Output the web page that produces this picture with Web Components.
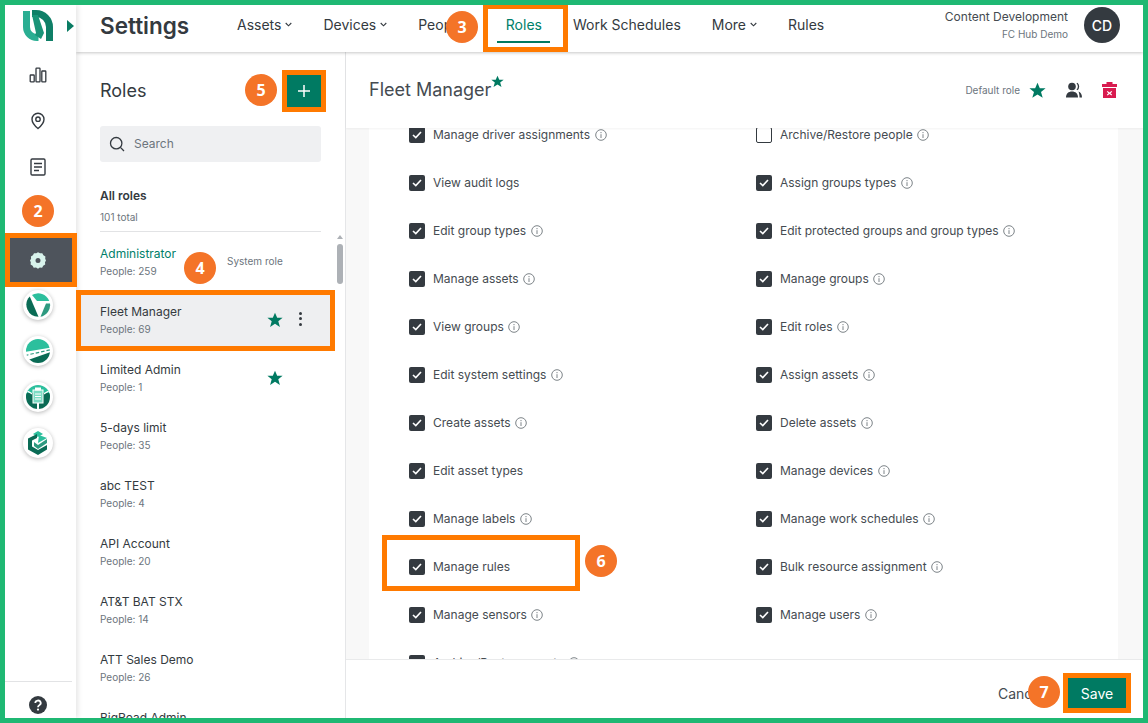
<!DOCTYPE html>
<html><head><meta charset="utf-8"><style>
html,body{margin:0;padding:0;background:#fff}
body{font-family:Inter,"Liberation Sans",sans-serif;color:#343a40}
</style></head><body>
<app-frame>
  <side-rail slot="rail"></side-rail>
  <top-bar slot="top"></top-bar>
  <roles-panel slot="panel"></roles-panel>
  <role-detail slot="detail"></role-detail>
</app-frame>
<script>
const STAR='M8 .8l2.2 5h5.4l-4.3 3.5 1.6 5.6L8 11.7l-4.9 3.2 1.6-5.6L.4 5.8h5.4z';
function def(name,css,html){
  customElements.define(name,class extends HTMLElement{
    connectedCallback(){
      if(this.shadowRoot)return;
      const r=this.attachShadow({mode:'open'});
      r.innerHTML='<style>'+css+'</style>'+(typeof html==='function'?html(this):html);
    }
  });
}
def('call-out',`:host{position:absolute;box-sizing:border-box;border:5px solid #ff7a00;pointer-events:none;z-index:5}`,'');
def('step-badge',`:host{position:absolute;width:32px;height:32px;border-radius:50%;background:#f47428;color:#fff;font:700 16px/32px "Open Sans",Inter,sans-serif;text-align:center;z-index:6}`,'<slot></slot>');
def('app-frame',`
:host{display:block;position:relative;box-sizing:border-box;width:1148px;height:723px;border:5px solid #1fb873;overflow:hidden;background:#fff}
.g{display:grid;grid-template-columns:71px 270px 1fr;grid-template-rows:47px 1fr;height:100%}
.r{grid-row:1/3;display:flex;min-height:0}.t{grid-column:2/4;display:flex;position:relative;z-index:3}.p{display:flex;min-height:0}.d{display:flex;min-height:0;min-width:0}
::slotted(*){flex:1;min-width:0}
`,`<div class="g"><div class="r"><slot name="rail"></slot></div><div class="t"><slot name="top"></slot></div><div class="p"><slot name="panel"></slot></div><div class="d"><slot name="detail"></slot></div></div>
<call-out style="left:0;top:228px;width:72px;height:54px"></call-out>
<call-out style="left:478px;top:-1px;width:85px;height:48px"></call-out>
<call-out style="left:71px;top:285px;width:259px;height:61px"></call-out>
<call-out style="left:277px;top:65px;width:44px;height:42px"></call-out>
<call-out style="left:377px;top:530px;width:198px;height:56px"></call-out>
<call-out style="left:1058px;top:668px;width:68px;height:40px"></call-out>
<step-badge style="left:17px;top:190px">2</step-badge>
<step-badge style="left:441px;top:6px">3</step-badge>
<step-badge style="left:179px;top:247px">4</step-badge>
<step-badge style="left:240px;top:69px">5</step-badge>
<step-badge style="left:580px;top:540px">6</step-badge>
<step-badge style="left:1023px;top:671px">7</step-badge>`);
const circ=(inner)=>`<span class="c"><svg width="26" height="26" viewBox="0 0 26 26">${inner}</svg></span>`;
def('side-rail',`
:host{display:flex;flex-direction:column;align-items:stretch;background:#fff;position:relative;z-index:4;box-shadow:2px 0 5px rgba(0,0,0,.1)}
.logo{height:47px;display:flex;align-items:flex-start;padding:5px 0 0 18px;box-sizing:border-box;gap:14px;flex:none}
.tri{margin-top:10px}
.nav{height:46px;display:flex;align-items:center;justify-content:center;flex:none;padding-right:5px}
.sel{height:44px;margin:0 4px 0 5px;background:#4e545c;display:flex;align-items:center;justify-content:center;flex:none;padding-right:6px}
.c{width:30px;height:30px;border-radius:50%;background:#fff;box-shadow:0 1px 4px rgba(0,0,0,.28);display:flex;align-items:center;justify-content:center}
.sp{flex:1}
.help{border-top:1px solid #e2e3e5;height:37px;margin-right:4px;display:flex;align-items:center;justify-content:center;box-sizing:border-box;padding:10px 1px 0 0;flex:none}
`,`<div class="logo"><svg width="30" height="31" viewBox="0 0 30 31" fill="none"><path d="M3.500 1v16a10.500 10.500 0 0 0 10.500 10.500h1.500" stroke="#2aae92" stroke-width="7"/><path d="M9 3.500h4A13.500 13.500 0 0 1 26.500 17v14" stroke="#0f7f67" stroke-width="7"/><path d="M9 5l6 0 6 18-3 6-6-4 1-2z" fill="#1a9478"/></svg><svg class="tri" width="7" height="12" viewBox="0 0 7 12"><path d="M0 0l7 6-7 6z" fill="#0a7c63"/></svg></div>
<div class="nav"><svg width="18" height="18" viewBox="0 0 18 18" fill="none" stroke="#343a40" stroke-width="1.3"><rect x="1.200" y="9" width="4" height="6.800" rx=".6"/><rect x="7" y="2.200" width="4" height="13.600" rx=".6"/><rect x="12.800" y="5" width="4" height="10.800" rx=".6"/></svg></div>
<div class="nav"><svg width="16" height="18" viewBox="0 0 16 18" fill="none" stroke="#343a40" stroke-width="1.4"><path d="M8 16.500S2 11.600 2 7.200a6 6 0 0 1 12 0c0 4.400-6 9.300-6 9.300z"/><circle cx="8" cy="7.200" r="2.200"/></svg></div>
<div class="nav"><svg width="16" height="18" viewBox="0 0 16 18" fill="none" stroke="#343a40" stroke-width="1.4"><rect x="1" y="1" width="14" height="16" rx="1.200"/><path d="M4 5.500h8M4 9h8M4 12.500h5"/></svg></div>
<div style="height:48px;flex:none"></div>
<div class="sel"><svg width="18" height="18" viewBox="0 0 18 18"><path fill="#d8f3ec" fill-rule="evenodd" d="M9 1.200l2 1.100 2.300-.1 1.100 2 2 1.200-.2 2.300L17 9.500l-1 1.800.2 2.300-2 1.200-1.100 1.900-2.300-.1-1.800 1.100-2-1.100-2.300.1-1.100-1.900-2-1.200.2-2.300L1 9.500l1.100-1.800L1.900 5.400l2-1.200 1.100-2 2.300.1zM9 7a2.500 2.500 0 1 0 0 5 2.500 2.500 0 0 0 0-5z"/></svg></div>
<div class="nav">${circ('<path d="M7 3A12 12 0 0 1 24.300 9H12z" fill="#2cbf9d"/><path d="M4.800 4.500L13.500 24.800A12 12 0 0 1 4.800 4.500z" fill="#0a6b55"/><path d="M25 11.500A12 12 0 0 1 15.500 24.800L21 11.500z" fill="#2e9a80"/>')}</div>
<div class="nav">${circ('<defs><clipPath id="b"><circle cx="13" cy="13" r="12"/></clipPath></defs><g clip-path="url(#b)"><path d="M0 0h26v9.500L0 14z" fill="#2cbf9d"/><path d="M3 22L26 14v12H3z" fill="#0a6b55"/><path d="M0 17.500L26 11.600" stroke="#2e9a80" stroke-width="1.200" stroke-dasharray="3.500 2"/></g>')}</div>
<div class="nav">${circ('<defs><clipPath id="d"><circle cx="13" cy="13" r="12"/></clipPath></defs><g clip-path="url(#d)"><rect width="26" height="13" fill="#2cbf9d"/><rect y="9" width="26" height="17" fill="#0a6b55"/><path d="M0 5l7 4v1.500L0 6.500zM26 5l-7 4v1.500l7-4z" fill="#fff"/><rect x="8" y="6" width="10" height="13" fill="#7bdcc4" stroke="#fff"/><path d="M10 10h6M10 12.500h6M10 15h6" stroke="#fff"/><rect x="10" y="3.500" width="6" height="3" fill="#fff"/><rect x="12" y="19" width="2" height="7" fill="#fff"/></g>')}</div>
<div class="nav">${circ('<path d="M13 1l5 3-5 3-5-3z" fill="#2cbf9d"/><path d="M3 8.500L12 4v4L7 10.500v6L13 20l9-5v4.500L13 25l-10-5.500z" fill="#0a6b55"/><path d="M9 12l4 3 9-6v4l-9 6-4-3z" fill="#2e9a80"/><path d="M14 5l8 3-9 5z" fill="#2cbf9d"/>')}</div>
<div class="sp"></div>
<div class="help"><svg width="18" height="18" viewBox="0 0 18 18"><circle cx="9" cy="9" r="9" fill="#343a40"/><path d="M6.300 7a2.700 2.500 0 1 1 4 2.200c-.9.5-1.300 1-1.300 2" fill="none" stroke="#fff" stroke-width="1.800"/><circle cx="9" cy="13.600" r="1.100" fill="#fff"/></svg></div>`);
const chev=`<svg class="ch" width="7" height="5" viewBox="0 0 7 5" fill="none" stroke="#343a40" stroke-width="1.100"><path d="M.7 1l2.800 2.800L6.300 1"/></svg>`;
def('nav-link',`
:host{display:flex;align-items:center;height:47px;font-size:14px;color:#343a40;position:relative;gap:4px;padding-bottom:8px;box-sizing:border-box}
:host([active]){color:#00806a}
:host([active])::after{content:"";position:absolute;left:-9px;right:-8px;bottom:9px;height:2px;background:#007a62}
`,h=>`<slot></slot>${h.hasAttribute('menu')?chev:''}`);
def('top-bar',`
:host{display:flex;align-items:center;background:#fff;box-shadow:0 1px 3px rgba(0,0,0,.22);padding:0 23px 0 24px;height:47px;box-sizing:border-box;position:relative}
h1{font:600 22.500px/1 Inter,sans-serif;margin:0 48px 0 0;padding-bottom:5px;color:#343a40;width:89px;white-space:nowrap}
nav{display:flex;gap:31px;flex:1}
.u{text-align:right;margin-right:16px;padding-bottom:5px}
.n{font-size:12px;line-height:16px;color:#454b51;white-space:nowrap}.o{font-size:10px;line-height:18px;color:#6c757d}
.a{width:36px;height:36px;border-radius:50%;background:#343a40;color:#fff;font-size:14px;font-weight:500;display:flex;align-items:center;justify-content:center;margin-bottom:7px}
`,`<h1>Settings</h1><nav><nav-link menu>Assets</nav-link><nav-link menu>Devices</nav-link><nav-link menu>People</nav-link><nav-link active>Roles</nav-link><nav-link>Work Schedules</nav-link><nav-link menu>More</nav-link><nav-link>Rules</nav-link></nav><div class="u"><div class="n">Content Development</div><div class="o">FC Hub Demo</div></div><div class="a">CD</div>`);
def('role-item',`
:host{display:flex;align-items:center;height:58px;box-sizing:border-box;padding:0 24px;flex:none;position:relative;width:254px}
:host([selected]){background:#eeeff1}
.x{flex:none;width:127px;margin-top:-1px}
.t{font-size:12px;line-height:18px;color:#343a40;white-space:nowrap}
:host([sys]) .t{color:#00806a}
.p{font-size:10px;line-height:17px;color:#6c757d;white-space:nowrap}
.s{font-size:10px;color:#6c757d;padding-bottom:4px;white-space:nowrap}
.i{position:absolute;left:191px;top:20px}
.m{position:absolute;left:223px;top:20px;display:flex;flex-direction:column;gap:2.400px}
.m b{width:3px;height:3px;border-radius:50%;background:#343a40;display:block}
`,h=>`<div class="x"><div class="t">${h.getAttribute('name')}</div><div class="p">People: ${h.getAttribute('people')}</div></div>
${h.hasAttribute('sys')?'<span class="s">System role</span>':''}
${h.hasAttribute('star')?`<svg class="i" width="16" height="16" viewBox="0 0 16 16"><path d="${STAR}" fill="#007a62"/></svg>`:''}
${h.hasAttribute('selected')?'<span class="m"><b></b><b></b><b></b></span>':''}`);
def('roles-panel',`
:host{display:flex;flex-direction:column;background:#fff;overflow:hidden;position:relative;border-right:1px solid #e5e6e8;box-sizing:border-box}
.h{display:flex;align-items:center;justify-content:space-between;padding:23px 24px 0 24px;height:32px;flex:none}
h2{font:400 18px/1 Inter,sans-serif;margin:0;color:#343a40}
.add{width:34px;height:32px;background:#007a62;display:flex;align-items:center;justify-content:center}
.s{margin:19px 24px 0;height:36px;background:#eff0f2;border-radius:3px;display:flex;align-items:center;padding:0 0 0 9px;gap:9px;font-size:12px;color:#6c757d;flex:none}
.s span{padding-bottom:1px}
.all{margin:25px 24px 0;font-size:12px;font-weight:600;line-height:18px;flex:none}
.tot{margin:5px 24px 0;font-size:10px;line-height:14px;color:#6c757d;flex:none}
hr{margin:7px 24px 0;border:0;border-top:1px solid #e2e3e5;flex:none}
.l{flex:1;min-height:0;overflow:hidden;display:flex;flex-direction:column;margin-top:2px}
.sb{position:absolute;right:2px;top:192px;width:6px;height:40px;background:#adb1b6;border-radius:3px}
.ar{position:absolute;right:2px;top:183px;width:0;height:0;border:3px solid transparent;border-bottom:4px solid #adb1b6;border-top:0}
`,`<div class="h"><h2>Roles</h2><div class="add"><svg width="14" height="14" viewBox="0 0 14 14" stroke="#fff" stroke-width="1.500"><path d="M7 1v12M1 7h12"/></svg></div></div>
<div class="s"><svg width="16" height="16" viewBox="0 0 16 16" fill="none" stroke="#343a40" stroke-width="1.300"><circle cx="7.200" cy="7.200" r="5.700"/><path d="M11.400 11.400L15 15"/></svg><span>Search</span></div>
<div class="all">All roles</div><div class="tot">101 total</div><hr>
<div class="sb"></div><div class="ar"></div>
<div class="l"><role-item sys name="Administrator" people="259"></role-item>
<role-item selected star name="Fleet Manager" people="69"></role-item>
<role-item star name="Limited Admin" people="1"></role-item>
<role-item name="5-days limit" people="35"></role-item>
<role-item name="abc TEST" people="4"></role-item>
<role-item name="API Account" people="20"></role-item>
<role-item name="AT&amp;T BAT STX" people="14"></role-item>
<role-item name="ATT Sales Demo" people="26"></role-item>
<role-item name="BigRoad Admin" people="3"></role-item></div>`);
def('perm-check',`
:host{display:flex;align-items:center;gap:8px;height:48px;font-size:12px;color:#454b51;white-space:nowrap}
.b{width:16px;height:16px;border-radius:2px;background:#343a40;display:flex;align-items:center;justify-content:center;flex:none;box-sizing:border-box}
:host([off]) .b{background:#fff;border:1px solid #343a40}
.t{padding-bottom:2px}
.i{margin-left:-3.500px}
`,h=>`<span class="b">${h.hasAttribute('off')?'':'<svg width="10" height="8" viewBox="0 0 10 8" fill="none" stroke="#fff" stroke-width="1.600"><path d="M1 4l2.800 2.600L9 1"/></svg>'}</span><span class="t">${h.getAttribute('label')}</span>${h.hasAttribute('noinfo')?'':'<svg class="i" width="12" height="12" viewBox="0 0 12 12" fill="none" stroke="#7d8388"><circle cx="6" cy="6" r="5.300"/><path d="M6 5.200V9M6 3v1.200"/></svg>'}`);
def('role-detail',`
:host{display:flex;flex-direction:column;background:#f8f8f8;min-height:0;position:relative}
.h{height:76px;flex:none;background:#fff;display:flex;align-items:center;padding:0 26px 0 23px;box-sizing:border-box;box-shadow:0 1px 2px rgba(0,0,0,.05);position:relative;z-index:1}
h2{font:400 18px/1 Inter,sans-serif;color:#454b51;margin:0}
.st{align-self:flex-start;margin-top:23px}
.sp{flex:1}
.dr{font-size:10px;color:#6c757d;margin-right:9px}
.ic{display:flex;margin-left:20px}
.sc{flex:1;min-height:0;overflow:hidden;padding:0 25px 0 23px}
.card{background:#fff;height:100%;padding:0 40px;box-sizing:border-box;overflow:hidden}
.gr{display:grid;grid-template-columns:347px 1fr;margin-top:-17px}
.f{height:59px;flex:none;background:#fff;border-top:1px solid #e9eaeb;display:flex;align-items:flex-start;justify-content:flex-end;padding:18px 17px 0 0;box-sizing:border-box;position:relative;z-index:1}
.c{font-size:14px;color:#454b51;position:absolute;left:652px;top:25px}
.sv{width:58px;height:30px;background:#007a62;color:#fff;font-size:14px;font-weight:400;display:flex;align-items:center;justify-content:center}
`,`<div class="h"><h2>Fleet Manager</h2><svg class="st" width="13" height="13" viewBox="0 0 16 16"><path d="${STAR}" fill="#007a62"/></svg><span class="sp"></span><span class="dr">Default role</span><svg width="17" height="17" viewBox="0 0 16 16"><path d="${STAR}" fill="#007a62"/></svg>
<span class="ic"><svg width="16" height="16" viewBox="0 0 16 16" fill="#343a40"><circle cx="6" cy="4.500" r="3.800"/><path d="M0 15.500c0-4 2.500-6 6-6s6 2 6 6z"/><path d="M10.500 1.500a4 4 0 0 1 0 6l1 .8a5 5 0 0 0 0-7.500zM12.500 9.500c2 .8 3.500 2.500 3.500 6h-2.500c0-2.500-.4-4.500-1-6z"/></svg></span>
<span class="ic"><svg width="15" height="16" viewBox="0 0 15 16"><path fill="#d81b4f" fill-rule="evenodd" d="M4.500 0h6v2H15v3H0V2h4.500zM1 6h13v10H1zM5.600 9l1.900 1.500L9.400 9l.8.800-1.700 1.500 1.700 1.500-.8.800-1.900-1.500-1.900 1.500-.8-.8 1.700-1.500-1.700-1.500z"/></svg></span></div>
<div class="sc"><div class="card"><div class="gr">
<perm-check label="Manage driver assignments"></perm-check><perm-check off label="Archive/Restore people"></perm-check>
<perm-check noinfo label="View audit logs"></perm-check><perm-check label="Assign groups types"></perm-check>
<perm-check label="Edit group types"></perm-check><perm-check label="Edit protected groups and group types"></perm-check>
<perm-check label="Manage assets"></perm-check><perm-check label="Manage groups"></perm-check>
<perm-check label="View groups"></perm-check><perm-check label="Edit roles"></perm-check>
<perm-check label="Edit system settings"></perm-check><perm-check label="Assign assets"></perm-check>
<perm-check label="Create assets"></perm-check><perm-check label="Delete assets"></perm-check>
<perm-check noinfo label="Edit asset types"></perm-check><perm-check label="Manage devices"></perm-check>
<perm-check label="Manage labels"></perm-check><perm-check label="Manage work schedules"></perm-check>
<perm-check noinfo label="Manage rules"></perm-check><perm-check label="Bulk resource assignment"></perm-check>
<perm-check label="Manage sensors"></perm-check><perm-check label="Manage users"></perm-check>
<perm-check label="Archive/Restore assets"></perm-check>
</div></div></div>
<div class="f"><span class="c">Cancel</span><div class="sv">Save</div></div>`);
</script>
</body></html>
